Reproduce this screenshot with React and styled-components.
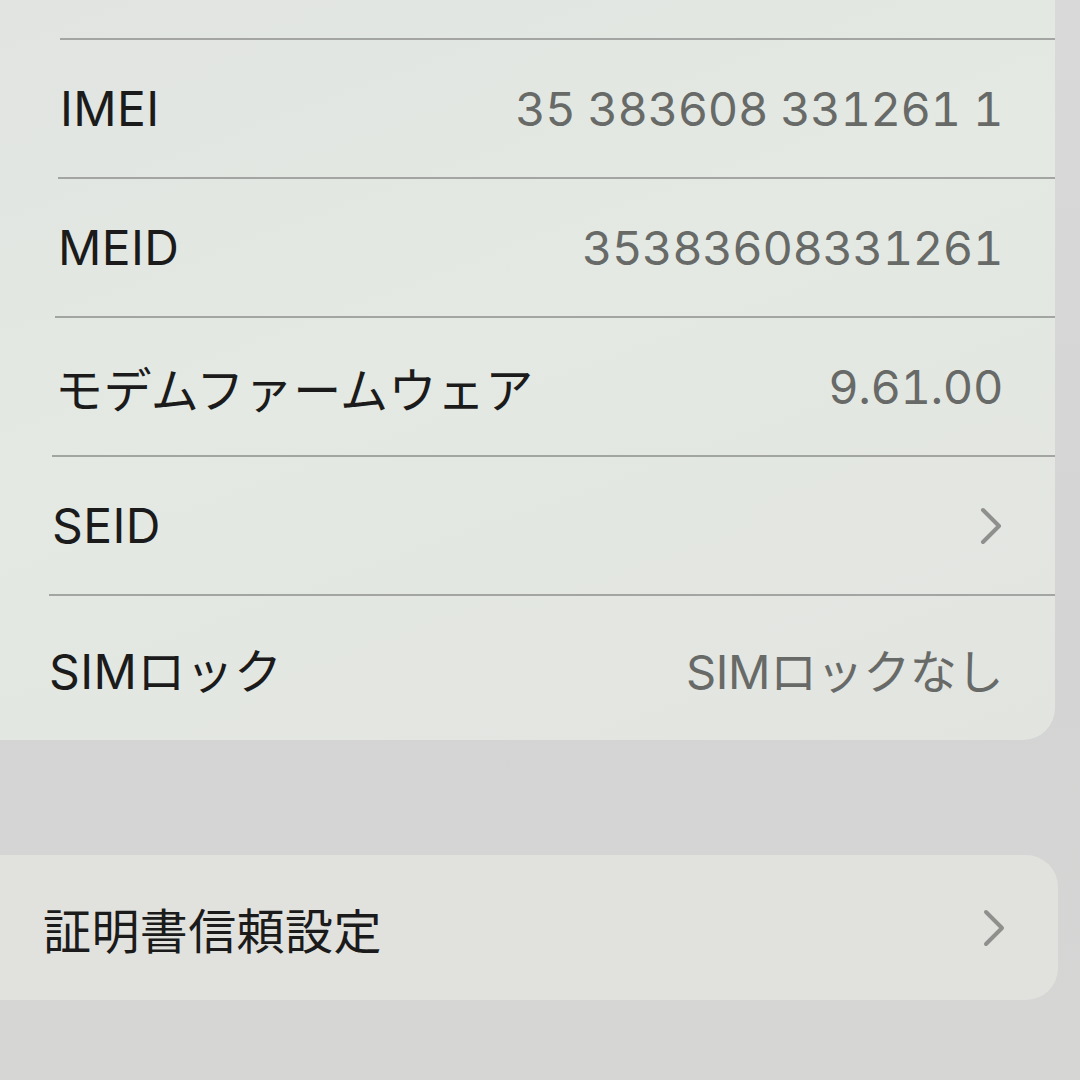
import React from 'react';
import styled, { createGlobalStyle } from 'styled-components';

const Global = createGlobalStyle`
  html, body {
    margin: 0;
    padding: 0;
    background: #d4d5d4;
    overflow: hidden;
  }
  body {
    font-family: Inter, "Noto Sans CJK JP", sans-serif;
  }
`;

const Page = styled.div`
  width: 1080px;
  height: 1080px;
  overflow: hidden;
  background: linear-gradient(180deg, #d8d9d8 0%, #d3d4d3 60%, #d6d7d5 100%);
`;

const Group = styled.div`
  margin-left: -40px;
  width: ${(p) => p.width}px;
  margin-top: ${(p) => p.top}px;
  padding-left: 100px;
  padding-top: ${(p) => p.padTop || 0}px;
  box-sizing: border-box;
  border-radius: ${(p) => (p.rounded ? '32px' : '0 0 32px 32px')};
  background: ${(p) => p.bg};
`;

const Row = styled.div`
  display: flex;
  align-items: center;
  justify-content: space-between;
  height: ${(p) => p.h || 139}px;
  margin-left: ${(p) => p.shift || 0}px;
  padding-right: 52px;
  box-sizing: border-box;
  border-top: ${(p) => (p.line ? '2px solid #a3a5a2' : 'none')};
`;

const Label = styled.span`
  font-size: 48px;
  color: #1b1b1b;
  letter-spacing: 0.4px;
`;

const Value = styled.span`
  font-size: 47px;
  color: #686a68;
  letter-spacing: -0.4px;
  font-variant-numeric: tabular-nums;
`;

const Chevron = () => (
  <svg width="24" height="38" viewBox="0 0 24 38">
    <path d="M4 3 L20 19 L4 35" fill="none" stroke="#8f908e" strokeWidth="4" strokeLinecap="round" strokeLinejoin="round" />
  </svg>
);

const rows = [
  { label: 'IMEI', value: '35 383608 331261 1', shift: 0 },
  { label: 'MEID', value: '35383608331261', shift: -2 },
  { label: 'モデムファームウェア', value: '9.61.00', shift: -5 },
  { label: 'SEID', chevron: true, shift: -8 },
  { label: 'SIMロック', value: 'SIMロックなし', h: 146, shift: -11 },
];

export default function App() {
  return (
    <Page>
      <Global />
      <Group
        width={1095}
        top={0}
        padTop={38}
        bg="linear-gradient(160deg, #e1e4e1 0%, #e4e9e3 45%, #e2e4e0 100%)"
      >
        {rows.map((r) => (
          <Row key={r.label} line h={r.h} shift={r.shift}>
            <Label>{r.label}</Label>
            {r.chevron ? <Chevron /> : <Value>{r.value}</Value>}
          </Row>
        ))}
      </Group>
      <Group width={1098} top={115} rounded bg="#e1e1de">
        <Row h={145} shift={-17}>
          <Label>証明書信頼設定</Label>
          <Chevron />
        </Row>
      </Group>
    </Page>
  );
}
